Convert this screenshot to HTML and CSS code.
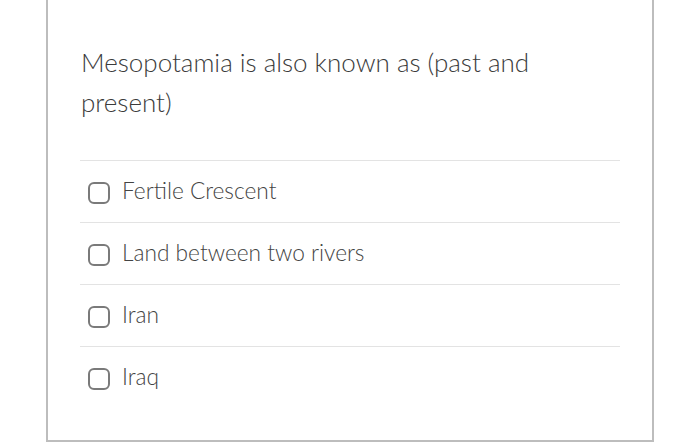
FILE: index.html
```html
<!DOCTYPE html>
<html>
<head>
<meta charset="utf-8">
<link rel="stylesheet" href="styles.css">
</head>
<body>
<div class="card">
  <div class="question">Mesopotamia is also known as (past and present)</div>
  <ul class="answers">
    <li class="answer"><span class="box"></span><span class="label">Fertile Crescent</span></li>
    <li class="answer"><span class="box"></span><span class="label">Land between two rivers</span></li>
    <li class="answer"><span class="box"></span><span class="label">Iran</span></li>
    <li class="answer"><span class="box"></span><span class="label">Iraq</span></li>
  </ul>
</div>
</body>
</html>
```
FILE: styles.css
```css
html, body {
  margin: 0;
  padding: 0;
  background: #fff;
}
body {
  font-family: Lato, "Open Sans", sans-serif;
  color: #3b3b3b;
}
.card {
  box-sizing: border-box;
  margin-left: 46px;
  width: 608px;
  height: 442px;
  border: 2px solid #bdbdbd;
  border-top: none;
  padding: 42px 32px 0 32px;
}
.question {
  font-size: 26px;
  font-weight: 300;
  line-height: 40px;
  padding-left: 1px;
  width: 470px;
  margin-bottom: 38px;
}
.answers {
  list-style: none;
  margin: 0;
  padding: 0;
}
.answer {
  box-sizing: border-box;
  height: 62px;
  border-top: 1px solid #e3e3e3;
  display: flex;
  align-items: center;
  padding-left: 8px;
  gap: 12px;
}
.box {
  box-sizing: border-box;
  width: 22px;
  height: 22px;
  border: 2px solid #7a7a7a;
  border-radius: 6px;
  margin-top: 2px;
}
.label {
  font-size: 22.7px;
  font-weight: 300;
  color: #444;
  padding-bottom: 3px;
}
```
